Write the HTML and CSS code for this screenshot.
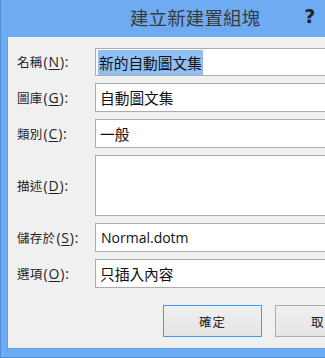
FILE: index.html
```html
<!DOCTYPE html>
<html lang="zh-Hant">
<head>
    <meta charset="utf-8">
    <title>建立新建置組塊</title>
    <link rel="stylesheet" href="styles.css">
</head>
<body>
    <div class="window">
        <!-- Title bar -->
        <div class="titlebar">
            <div class="title">建立新建置組塊</div>
            <div class="help">?</div>
        </div>

        <!-- Dialog body -->
        <div class="content">
            <div class="form">
                <label class="label">名稱<span class="key">(<u>N</u>):</span></label>
                <div class="field"><span class="selected">新的自動圖文集</span></div>

                <label class="label">圖庫<span class="key">(<u>G</u>):</span></label>
                <div class="field">自動圖文集</div>

                <label class="label">類別<span class="key">(<u>C</u>):</span></label>
                <div class="field">一般</div>

                <label class="label">描述<span class="key">(<u>D</u>):</span></label>
                <div class="field"></div>

                <label class="label">儲存於<span class="key">(<u>S</u>):</span></label>
                <div class="field latin">Normal.dotm</div>

                <label class="label">選項<span class="key">(<u>O</u>):</span></label>
                <div class="field">只插入內容</div>
            </div>

            <div class="buttons">
                <button class="btn default">確定</button>
                <button class="btn">取消</button>
            </div>
        </div>
    </div>
</body>
</html>
```

FILE: styles.css
```css
/* Reset */
* {
    margin: 0;
    padding: 0;
    box-sizing: border-box;
}

body {
    width: 325px;
    height: 358px;
    overflow: hidden;
    background: #6ba9f0;
    font-family: "Noto Sans CJK TC", "Noto Sans", sans-serif;
    color: #1e1e1e;
}

/* Window frame */
.window {
    width: 400px;
    height: 358px;
    background: #6eabf2;
    border-left: 1px solid #4e8fd9;
    border-bottom: 1px solid #4e8fd9;
    padding-left: 6px;
}

.titlebar {
    height: 37px;
    display: flex;
    align-items: center;
}

.title {
    padding-left: 123px;
    font-size: 18.5px;
    color: #3a3a3a;
    letter-spacing: 0.1px;
    line-height: 1;
    margin-top: -2px;
}

.help {
    margin-left: 44px;
    margin-top: -6px;
    font-family: "DejaVu Sans", sans-serif;
    font-weight: 700;
    font-size: 19px;
    color: #222;
}

/* Dialog body */
.content {
    height: 312px;
    background: #f0f0f0;
    border-left: 1px solid #5d9de6;
    border-bottom: 1px solid #5d9de6;
    padding-top: 10px;
}

.form {
    display: grid;
    grid-template-columns: 87px 1fr;
    grid-template-rows: 29px 30px 30px 62px 30px 30px;
    row-gap: 6px;
}

.label {
    padding-left: 9px;
    display: flex;
    align-items: center;
    font-size: 12.5px;
    letter-spacing: 0.3px;
    color: #222;
}

.label .key {
    font-family: "Open Sans", "Noto Sans", sans-serif;
    font-size: 14px;
    letter-spacing: 0.8px;
    margin-left: 1px;
}

.label u {
    text-underline-offset: 2px;
}

.field {
    background: #fff;
    border: 1px solid #acacac;
    display: flex;
    align-items: center;
    padding-left: 4px;
    font-size: 14.7px;
    color: #111;
    margin-top: 1px;
}

.field.latin {
    font-family: "Open Sans", "Noto Sans", sans-serif;
    font-size: 14px;
    padding-left: 5px;
}

.selected {
    background: #8fbff4;
    line-height: 25px;
    margin-left: -2px;
    padding: 0 1px;
}

/* Buttons */
.buttons {
    display: flex;
    gap: 13px;
    padding-left: 155px;
    margin-top: 17px;
}

.btn {
    width: 99px;
    height: 32px;
    font-family: "Noto Sans CJK TC", sans-serif;
    font-size: 12.5px;
    letter-spacing: 1px;
    color: #222;
    background: linear-gradient(#f0f0f0, #e5e5e5);
    border: 1px solid #acacac;
}

.btn.default {
    border-color: #3c9cf2;
}
```
